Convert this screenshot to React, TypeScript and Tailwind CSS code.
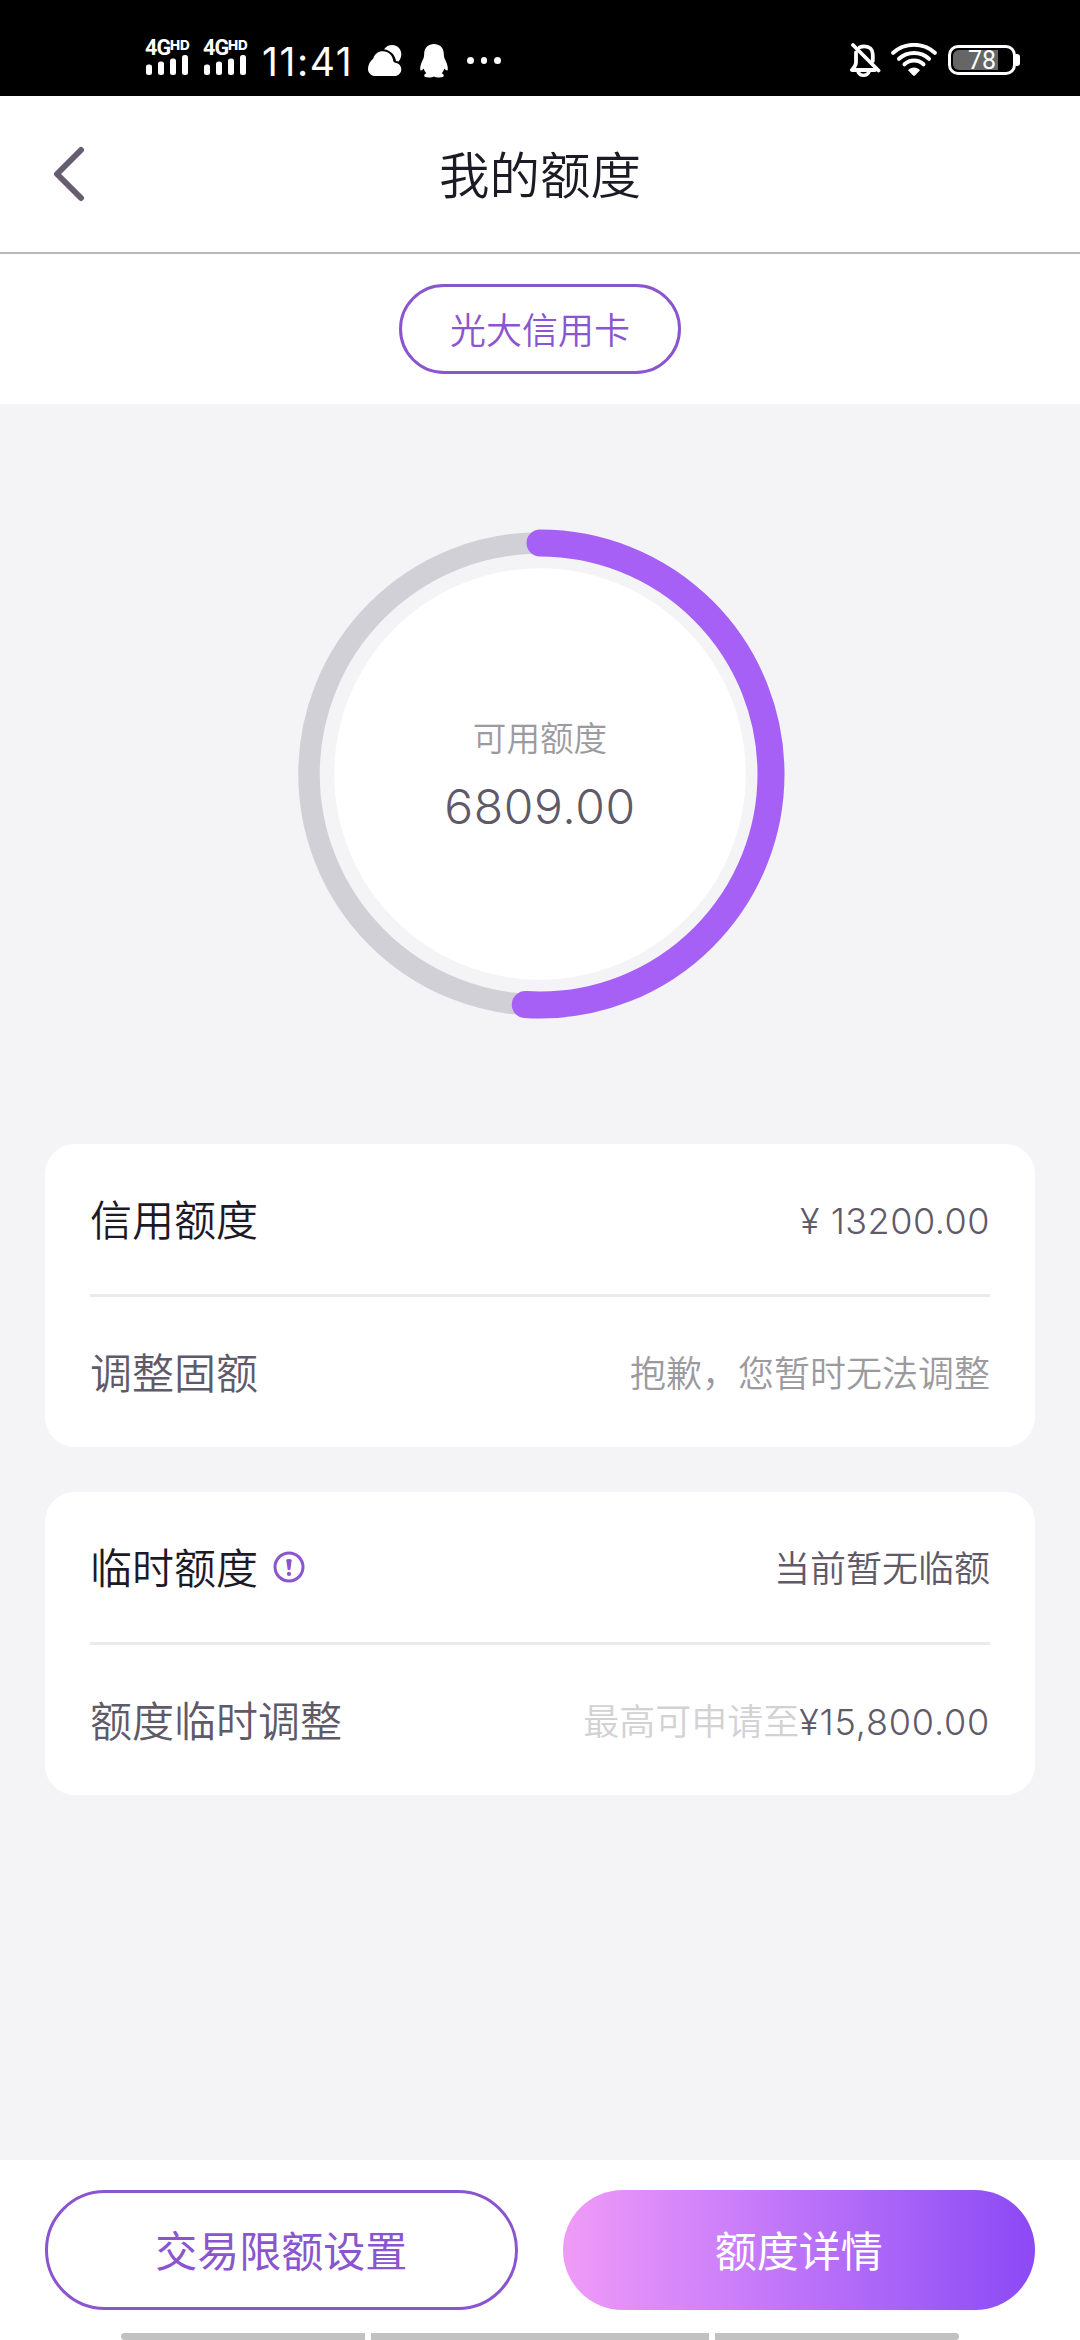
import type { ReactNode } from "react";

interface LimitRow {
  label: ReactNode;
  value: ReactNode;
  labelClass: string;
  valueClass: string;
}

const RADIUS = 231;
const PERCENT = 0.51;

const SignalIcon = () => (
  <div className="relative h-[36px] w-[46px] font-['Roboto',sans-serif] font-bold">
    <span className="absolute left-0 top-0 text-[21.5px] leading-[15px] tracking-[-0.8px]">4G</span>
    <span className="absolute left-[25px] top-0 font-['Inter',sans-serif] text-[13.5px] leading-[11px] font-extrabold">HD</span>
    <svg className="absolute left-[1px] top-[15px]" width="43" height="21" viewBox="0 0 43 21" fill="#fff">
      <rect x="0" y="9.5" width="6" height="10.5" rx="2.5" />
      <rect x="12" y="6.5" width="6" height="13.5" rx="2.5" />
      <rect x="24" y="3.5" width="6" height="16.5" rx="2.5" />
      <rect x="36" y="0" width="6" height="20" rx="2.5" />
    </svg>
  </div>
);

const CloudIcon = () => (
  <svg width="34" height="32" viewBox="0 0 34 32" fill="#fff">
    <path d="M16 4.2C18 1.6 21 0 24.3 0C29.4 0 33.3 4 33.3 9C33.3 11.9 32.4 14.4 30.6 16.4C29.8 16.3 29.1 16.2 28 16C27.4 10.2 22.6 5.2 16 4.2Z" />
    <path d="M7.5 31C3.2 31 0 27.9 0 23.9C0 19.5 2 16.6 5.3 13.4C6.6 8.9 10.2 6.2 14.8 6.2C20.5 6.2 24.5 9.9 25.3 16.2C26 17.6 27.1 17.6 28.3 17.9C31.3 18.6 33.3 21.2 33.3 24.2C33.3 28 30.3 31 26.5 31Z" />
  </svg>
);

const PenguinIcon = () => (
  <svg width="28" height="34" viewBox="0 0 28 34" fill="#fff">
    <path d="M14 0C19.6 0 23.6 3.8 23.8 9.4C23.9 11.4 24 13 24.7 14.8C26.4 18.2 28 21.8 27.8 25C27.7 27.4 26 26.8 24.4 24.6C23.9 26.4 23 28 21.7 29.3C23 29.9 23.8 30.8 23.8 31.8C23.8 33.1 22 33.5 19.3 33.5C16.8 33.5 15.2 33.2 14 32.4C12.8 33.2 11.2 33.5 8.7 33.5C6 33.5 4.2 33.1 4.2 31.8C4.2 30.8 5 29.9 6.3 29.3C5 28 4.1 26.4 3.6 24.6C2 26.8 .3 27.4 .2 25C0 21.8 1.6 18.2 3.3 14.8C4 13 4.1 11.4 4.2 9.4C4.4 3.8 8.4 0 14 0Z" />
  </svg>
);

const BellOffIcon = () => (
  <svg width="31" height="35" viewBox="0 0 31 35" fill="none" stroke="#fff" strokeWidth="3.8" strokeLinecap="round">
    <path d="M6 9.5V19.5C6 22.5 3.5 25 2 27H25" strokeLinejoin="round" />
    <path d="M9.5 4.4C11 3.6 12.6 3.3 14.5 3.3C19.5 3.3 22.8 6.8 22.8 11.5V18" />
    <path d="M8 29C9 31.3 11.2 32.3 13.5 32.3C15.8 32.3 18 31.3 19 29" strokeWidth="3.2" />
    <path d="M3 2L28.5 27.5" />
  </svg>
);

const WifiIcon = () => (
  <svg width="46" height="34" viewBox="0 0 46 34" fill="none" stroke="#fff" strokeWidth="4" strokeLinecap="round">
    <path d="M2.2 9.8C14 -.8 32 -.8 43.8 9.8" />
    <path d="M8 15.8C16.5 8 29.5 8 38 15.8" />
    <path d="M13.5 21.3C19 16.3 27 16.3 32.5 21.3" />
    <path d="M17 27.2C20 23.6 26 23.6 29 27.2L24.2 32.2Q23 33.4 21.8 32.2Z" fill="#fff" stroke="none" />
  </svg>
);

const Battery = () => (
  <div className="flex items-center">
    <div className="flex h-[30px] w-[68px] rounded-[10px] border-[3px] border-white p-[2px]">
      <div className="flex h-[20px] w-[45px] items-center justify-end rounded-l-[6px] bg-[#666] pr-[2px] font-['Roboto',sans-serif] text-[25px] leading-none font-normal">
        78
      </div>
    </div>
    <div className="h-[12px] w-[4px] rounded-r-[3px] bg-white" />
  </div>
);

const StatusBar = () => (
  <div className="flex h-[96px] shrink-0 justify-between bg-black pl-[145px] pr-[60px] text-white">
    <div className="flex pt-[40px]">
      <SignalIcon />
      <div className="ml-[12px]">
        <SignalIcon />
      </div>
      <div className="ml-[13px] mt-[2px] w-[103px] whitespace-nowrap font-['Inter',sans-serif] text-[39px] leading-[40px] font-normal tracking-[1.6px]">
        11:41
      </div>
      <div className="ml-[3px] mt-[5px]">
        <CloudIcon />
      </div>
      <div className="ml-[18px] mt-[4px]">
        <PenguinIcon />
      </div>
      <div className="ml-[19px] mt-[17px] flex gap-[7px]">
        <i className="size-[6.5px] rounded-full bg-white" />
        <i className="size-[6.5px] rounded-full bg-white" />
        <i className="size-[6.5px] rounded-full bg-white" />
      </div>
    </div>
    <div className="flex pt-[43px]">
      <BellOffIcon />
      <div className="ml-[10px]">
        <WifiIcon />
      </div>
      <div className="ml-[11px] mt-[2px]">
        <Battery />
      </div>
    </div>
  </div>
);

const LimitRing = () => {
  const length = 2 * Math.PI * RADIUS;

  return (
    <div className="grid h-[740px] shrink-0 place-items-center">
      <svg className="col-start-1 row-start-1" width="490" height="490" viewBox="-245 -245 490 490" fill="none">
        <circle r={RADIUS} stroke="#d2d0d7" strokeWidth="21.5" />
        <circle r="205.7" fill="#fff" />
        <circle
          r={RADIUS}
          stroke="#a660f6"
          strokeWidth="27"
          strokeLinecap="round"
          strokeDasharray={`${length * PERCENT} ${length}`}
          transform="rotate(-90)"
        />
      </svg>
      <div className="col-start-1 row-start-1 flex flex-col items-center pt-[6px]">
        <p className="text-[33.6px] leading-[48px] text-[#9b9a9f]">可用额度</p>
        <p className="mt-[12px] text-[48px] leading-[64px] font-light tracking-[0.6px] text-[#5f5a69]">6809.00</p>
      </div>
    </div>
  );
};

const InfoIcon = () => (
  <svg width="32" height="32" viewBox="0 0 32 32" fill="none">
    <circle cx="16" cy="16" r="14" stroke="#8a55cf" strokeWidth="3" />
    <path d="M13.3 9.2Q13.3 8 16 8Q18.7 8 18.7 9.2L17.4 18.4Q16 19.8 14.6 18.4Z" fill="#8a55cf" />
    <circle cx="16" cy="22.9" r="2.1" fill="#8a55cf" />
  </svg>
);

const LimitCard = ({ rows }: { rows: LimitRow[] }) => (
  <div className="divide-y-[3px] divide-[#ebebed] rounded-[30px] bg-white px-[45px]">
    {rows.map((row, i) => (
      <div key={i} className="box-content flex h-[150px] items-center justify-between">
        <div className={`flex items-center pt-[3px] text-[42px] ${row.labelClass}`}>{row.label}</div>
        <div className={`pt-[4px] text-[36px] ${row.valueClass}`}>{row.value}</div>
      </div>
    ))}
  </div>
);

const creditRows: LimitRow[] = [
  {
    label: "信用额度",
    value: <span className="tracking-[0.5px]">¥ 13200.00</span>,
    labelClass: "text-[#1d1a26]",
    valueClass: "text-[#5f5a69]",
  },
  { label: "调整固额", value: "抱歉，您暂时无法调整", labelClass: "text-[#5f5a69]", valueClass: "text-[#9b9a9f]" },
];

const tempRows: LimitRow[] = [
  {
    label: (
      <>
        临时额度
        <span className="mb-[4px] ml-[15px]">
          <InfoIcon />
        </span>
      </>
    ),
    value: "当前暂无临额",
    labelClass: "text-[#1d1a26]",
    valueClass: "text-[#5f5a69]",
  },
  {
    label: "额度临时调整",
    value: (
      <>
        <span className="text-[#d2d1d4]">最高可申请至</span>
        <span className="tracking-[0.8px]">¥15,800.00</span>
      </>
    ),
    labelClass: "text-[#5f5a69]",
    valueClass: "text-[#5f5a69]",
  },
];

const App = () => {
  return (
    <div
      lang="zh-CN"
      className="flex h-[2340px] w-[1080px] flex-col overflow-hidden bg-[#f4f4f7] font-[350] font-['Inter','Noto_Sans_CJK_SC',sans-serif]"
    >
      <StatusBar />

      <header className="grid h-[158px] shrink-0 grid-cols-[1fr_auto_1fr] items-center border-b-2 border-[#b8b8b9] bg-white px-[52px]">
        <svg width="34" height="56" viewBox="0 0 34 56" fill="none" stroke="#665d70" strokeWidth="6" strokeLinecap="round" strokeLinejoin="round">
          <path d="M29 4L5 28L29 52" />
        </svg>
        <h1 className="pt-[4px] text-[50.5px] text-[#1d1a26]">我的额度</h1>
      </header>

      <div className="flex h-[150px] shrink-0 items-center justify-center bg-white">
        <button className="h-[90px] w-[282px] rounded-full border-[3px] border-[#8a55cf] pt-[4px] text-[36px] text-[#8a55cf]">
          光大信用卡
        </button>
      </div>

      <LimitRing />

      <main className="flex grow flex-col gap-[45px] px-[45px]">
        <LimitCard rows={creditRows} />
        <LimitCard rows={tempRows} />
      </main>

      <footer className="flex h-[180px] shrink-0 flex-col bg-white pt-[30px]">
        <div className="grid grid-cols-2 gap-[45px] px-[45px] text-[42px] font-normal">
          <button className="h-[120px] rounded-full border-[3px] border-[#8a55cf] pt-[3px] text-[#8a55cf]">
            交易限额设置
          </button>
          <button className="h-[120px] rounded-full bg-linear-to-r from-[#f09bf7] via-[#c277f9] via-45% to-[#8c48f4] pt-[3px] text-white">
            额度详情
          </button>
        </div>
        <div className="mt-auto flex gap-[6px] px-[121px]">
          <div className="h-[7px] w-[244px] rounded-l-full bg-[#c1c1c1]" />
          <div className="h-[7px] flex-1 bg-[#c1c1c1]" />
          <div className="h-[7px] w-[244px] rounded-r-full bg-[#c1c1c1]" />
        </div>
      </footer>
    </div>
  );
};

export default App;
